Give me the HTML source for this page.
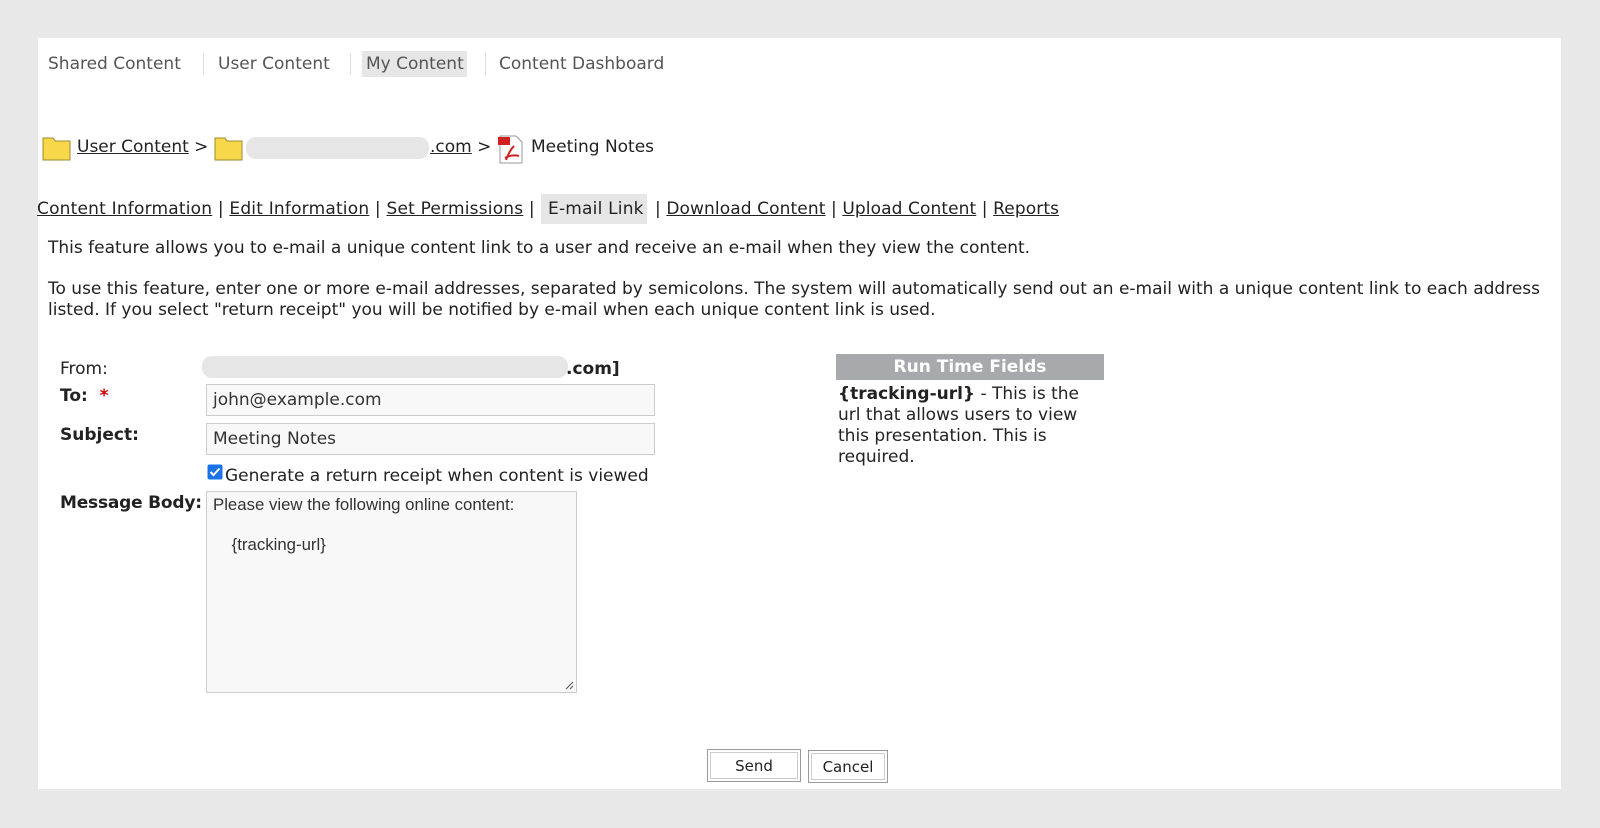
<!DOCTYPE html>
<html><head><meta charset="utf-8"><style>
*{margin:0;padding:0;box-sizing:border-box}
body{width:1600px;height:828px;background:#e8e8e8;font-family:"DejaVu Sans","Liberation Sans",sans-serif;font-size:17px;color:#222;position:relative;overflow:hidden}
.panel{position:absolute;left:38px;top:38px;width:1523px;height:751px;background:#fff}
.a{position:absolute;white-space:nowrap;line-height:20px}
.nav{color:#555;font-size:17px}
.sep{position:absolute;width:1px;background:#ddd;height:22px}
u{text-decoration:underline}
.blur{position:absolute;background:#e6e6e6;border-radius:10px}
.inp{position:absolute;border:1px solid #ccc;background:#f8f8f8;padding-left:6px;line-height:30px;font-size:17px;color:#333}
.btn{position:absolute;border:1px solid #999;box-shadow:inset 0 0 0 2px #fff,inset 0 0 0 3px #ccc;background:#fff;text-align:center;font-family:"DejaVu Sans",sans-serif;font-size:15px;line-height:32px}
.tab{letter-spacing:0.2px}
</style></head><body>
<div class="panel"></div>
<div style="position:absolute;left:362px;top:51px;width:105px;height:26px;background:#e6e6e6"></div>
<div class="a nav" style="left:48px;top:54px">Shared Content</div>
<div class="sep" style="left:203px;top:53px"></div>
<div class="a nav" style="left:218px;top:54px">User Content</div>
<div class="sep" style="left:350px;top:53px"></div>
<div class="a nav" style="left:366px;top:54px">My Content</div>
<div class="sep" style="left:485px;top:53px"></div>
<div class="a nav" style="left:499px;top:54px">Content Dashboard</div>

<svg style="position:absolute;left:42px;top:134px" width="30" height="28"><path d="M1 4h10l2 3h15v19H1z" fill="#f7d84a" stroke="#a08830"/></svg>
<div class="a" style="left:77px;top:137px"><u>User Content</u> &gt;</div>
<svg style="position:absolute;left:214px;top:134px" width="30" height="28"><path d="M1 4h10l2 3h15v19H1z" fill="#f7d84a" stroke="#a08830"/></svg>
<div class="blur" style="left:246px;top:137px;width:183px;height:22px"></div>
<div class="a" style="left:430px;top:137px"><u>.com</u> &gt;</div>
<svg style="position:absolute;left:496px;top:134px" width="30" height="30"><path d="M4 2h16l6 6v21H4z" fill="#fff" stroke="#999"/><rect x="2" y="3" width="12" height="8" fill="#d02020"/><path d="M10 26c3-8 6-12 8-14M9 24c5-3 10-3 14-2" stroke="#d02020" stroke-width="2" fill="none"/></svg>
<div class="a" style="left:531px;top:137px">Meeting Notes</div>

<div style="position:absolute;left:541px;top:194px;width:106px;height:30px;background:#e6e6e6"></div>
<div class="a tab" style="left:37px;top:199px"><u>Content Information</u> | <u>Edit Information</u> | <u>Set Permissions</u> |</div>
<div class="a tab" style="left:548px;top:199px">E-mail Link</div>
<div class="a" style="left:655px;top:199px;letter-spacing:0.1px">| <u>Download Content</u> | <u>Upload Content</u> | <u>Reports</u></div>

<div class="a" style="left:48px;top:238px">This feature allows you to e-mail a unique content link to a user and receive an e-mail when they view the content.</div>
<div class="a" style="left:48px;top:279px">To use this feature, enter one or more e-mail addresses, separated by semicolons. The system will automatically send out an e-mail with a unique content link to each address</div>
<div class="a" style="left:48px;top:300px">listed. If you select "return receipt" you will be notified by e-mail when each unique content link is used.</div>

<div class="a" style="left:60px;top:359px">From:</div>
<div class="blur" style="left:202px;top:356px;width:366px;height:22px"></div>
<div class="a" style="left:566px;top:359px;font-weight:bold">.com]</div>
<div class="a" style="left:60px;top:386px;font-weight:bold">To: &nbsp;<span style="color:#c00">*</span></div>
<div class="inp" style="left:206px;top:384px;width:449px;height:32px">john@example.com</div>
<div class="a" style="left:60px;top:425px;font-weight:bold">Subject:</div>
<div class="inp" style="left:206px;top:423px;width:449px;height:32px">Meeting Notes</div>
<svg style="position:absolute;left:207px;top:464px" width="16" height="16"><rect x="0.5" y="0.5" width="15" height="15" rx="2" fill="#1a73e8"/><path d="M3.5 8l3 3 6-6.5" stroke="#fff" stroke-width="2" fill="none"/></svg>
<div class="a" style="left:225px;top:466px">Generate a return receipt when content is viewed</div>
<div class="a" style="left:60px;top:493px;font-weight:bold;letter-spacing:-0.2px">Message Body:</div>
<div style="position:absolute;left:206px;top:491px;width:371px;height:202px;border:1px solid #ccc;background:#f8f8f8;font-family:'Liberation Sans',sans-serif;font-size:16.8px;color:#333;padding:3px 6px;line-height:20px">Please view the following online content:<br><br>&nbsp;&nbsp;&nbsp;&nbsp;{tracking-url}
<svg style="position:absolute;right:2px;bottom:2px" width="10" height="10"><path d="M9 2L2 9M9 6L6 9" stroke="#555"/></svg></div>

<div style="position:absolute;left:836px;top:354px;width:268px;height:26px;background:#a7a9ac;color:#fff;font-weight:bold;text-align:center;line-height:26px">Run Time Fields</div>
<div style="position:absolute;left:838px;top:384px;width:250px;line-height:21px"><b>{tracking-url}</b> - This is the url that allows users to view this presentation. This is required.</div>

<div class="btn" style="left:707px;top:749px;width:94px;height:33px">Send</div>
<div class="btn" style="left:808px;top:750px;width:80px;height:33px">Cancel</div>
</body></html>
